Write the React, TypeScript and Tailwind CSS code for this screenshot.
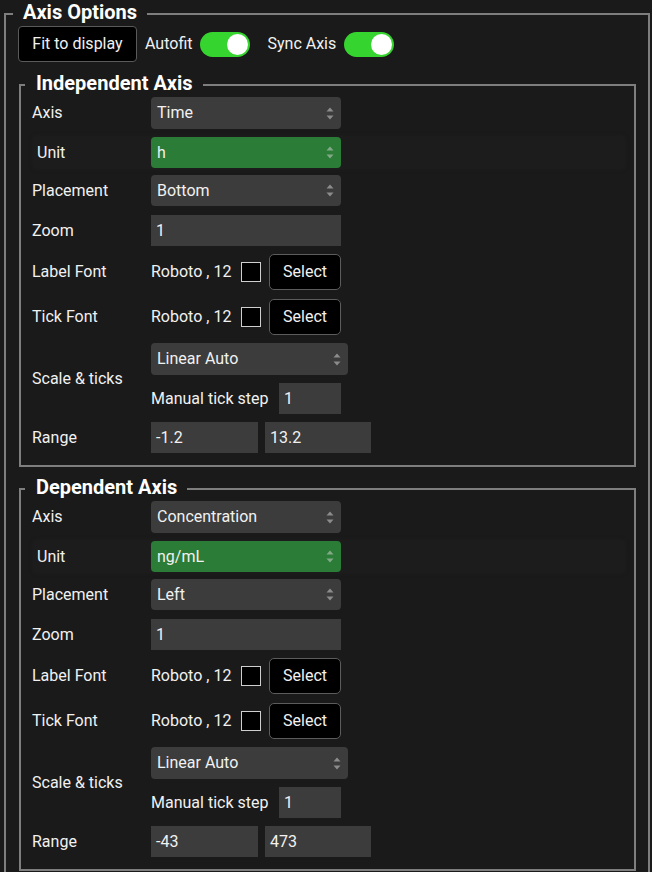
import React from "react";

function Arrows() {
  return (
    <svg width="8" height="13" viewBox="0 0 8 13" className="shrink-0">
      <path d="M0.5 4.5 L4 0.5 L7.5 4.5 Z" fill="rgba(205,205,205,0.55)" />
      <path d="M0.5 8.5 L4 12.5 L7.5 8.5 Z" fill="rgba(205,205,205,0.55)" />
    </svg>
  );
}

function Select({ value, green, wide }: { value: string; green?: boolean; wide?: boolean }) {
  return (
    <div
      className={`flex items-center justify-between rounded-[4px] pl-[6px] pr-[7px] ${
        green ? "bg-[#2b7c37] h-[31px]" : "bg-[#3c3c3c] h-[32px]"
      } ${wide ? "w-[197px]" : "w-[190px]"}`}
    >
      <span>{value}</span>
      <Arrows />
    </div>
  );
}

function Input({ value, w }: { value: string; w: string }) {
  return <div className={`flex h-[31px] items-center bg-[#3c3c3c] pl-[5px] ${w}`}>{value}</div>;
}

function Toggle() {
  return (
    <div className="flex h-[25px] w-[50px] items-center justify-end rounded-full bg-[#36d42f] pr-[2px]">
      <div className="h-[21px] w-[21px] rounded-full bg-white" />
    </div>
  );
}

function Row({ label, children, className = "" }: { label: string; children: React.ReactNode; className?: string }) {
  return (
    <div className={`flex items-center ${className}`}>
      <div className="w-[119px] shrink-0">{label}</div>
      {children}
    </div>
  );
}

function FontRow({ label, className = "" }: { label: string; className?: string }) {
  return (
    <Row label={label} className={className}>
      <div className="flex items-center">
        <span className="w-[90px]">Roboto , 12</span>
        <div className="h-[20px] w-[20px] border-[1.5px] border-[#cfcfcf] bg-black" />
        <div className="ml-[8px] flex h-[36px] w-[72px] items-center justify-center rounded-[5px] border border-[#5c5c5c] bg-black">
          Select
        </div>
      </div>
    </Row>
  );
}

function AxisSection({
  title,
  axis,
  unit,
  placement,
  r1,
  r2,
  className = "",
}: {
  title: string;
  axis: string;
  unit: string;
  placement: string;
  r1: string;
  r2: string;
  className?: string;
}) {
  return (
    <fieldset className={`ml-px border-2 border-[#7e7e7e] ${className}`}>
      <legend className="ml-[4px] pl-[11px] pr-[10px] pb-[4px] text-[20px] font-bold leading-[20px] text-white">
        {title}
      </legend>
      <div className="flex flex-col pb-[12px] pl-[11px]">
        <Row label="Axis">
          <Select value={axis} />
        </Row>
        <div className="mt-2 ml-[2px] flex w-[590px] items-center bg-[#1c1c1c] pl-[3px] shadow-[0_0_4px_rgba(36,36,36,0.6)]">
          <div className="w-[114px] shrink-0">Unit</div>
          <Select value={unit} green />
        </div>
        <Row label="Placement" className="mt-[7px]">
          <div className="flex h-[31px] w-[190px] items-center justify-between rounded-[4px] bg-[#3c3c3c] pl-[6px] pr-[7px]">
            <span>{placement}</span>
            <Arrows />
          </div>
        </Row>
        <Row label="Zoom" className="mt-[9px]">
          <Input value="1" w="w-[190px]" />
        </Row>
        <FontRow label="Label Font" className="mt-2" />
        <FontRow label="Tick Font" className="mt-[9px]" />
        <Row label="Scale & ticks" className="mt-2">
          <div className="flex flex-col">
            <Select value="Linear Auto" wide />
            <div className="mt-2 flex items-center">
              <span className="w-[128px]">Manual tick step</span>
              <Input value="1" w="w-[62px]" />
            </div>
          </div>
        </Row>
        <Row label="Range" className="mt-2">
          <div className="flex gap-[7px]">
            <Input value={r1} w="w-[107px]" />
            <Input value={r2} w="w-[106px]" />
          </div>
        </Row>
      </div>
    </fieldset>
  );
}

export default function App() {
  return (
    <div className="min-h-screen bg-[#1a1a1a] pt-[2px] font-['Roboto','Liberation_Sans',sans-serif] text-[16px] text-[#f1f1f1]">
      <fieldset className="ml-[4px] mr-[2px] border-2 border-[#7e7e7e]">
        <legend className="ml-[7px] px-[10px] pb-[4px] text-[20px] font-bold leading-[20px] text-white">
          Axis Options
        </legend>
        <div className="flex flex-col pb-[12px] pl-[12px] pr-[12px]">
          <div className="flex items-center">
            <div className="flex h-[36px] w-[119px] items-center justify-center rounded-[4px] border border-[#5a5a5a] bg-black">
              Fit to display
            </div>
            <span className="ml-[8px]">Autofit</span>
            <div className="ml-[8px]">
              <Toggle />
            </div>
            <span className="ml-[17px]">Sync Axis</span>
            <div className="ml-[8px]">
              <Toggle />
            </div>
          </div>
          <AxisSection
            title="Independent Axis"
            axis="Time"
            unit="h"
            placement="Bottom"
            r1="-1.2"
            r2="13.2"
            className="mt-[11px]"
          />
          <AxisSection
            title="Dependent Axis"
            axis="Concentration"
            unit="ng/mL"
            placement="Left"
            r1="-43"
            r2="473"
            className="mt-[10px]"
          />
        </div>
      </fieldset>
    </div>
  );
}
